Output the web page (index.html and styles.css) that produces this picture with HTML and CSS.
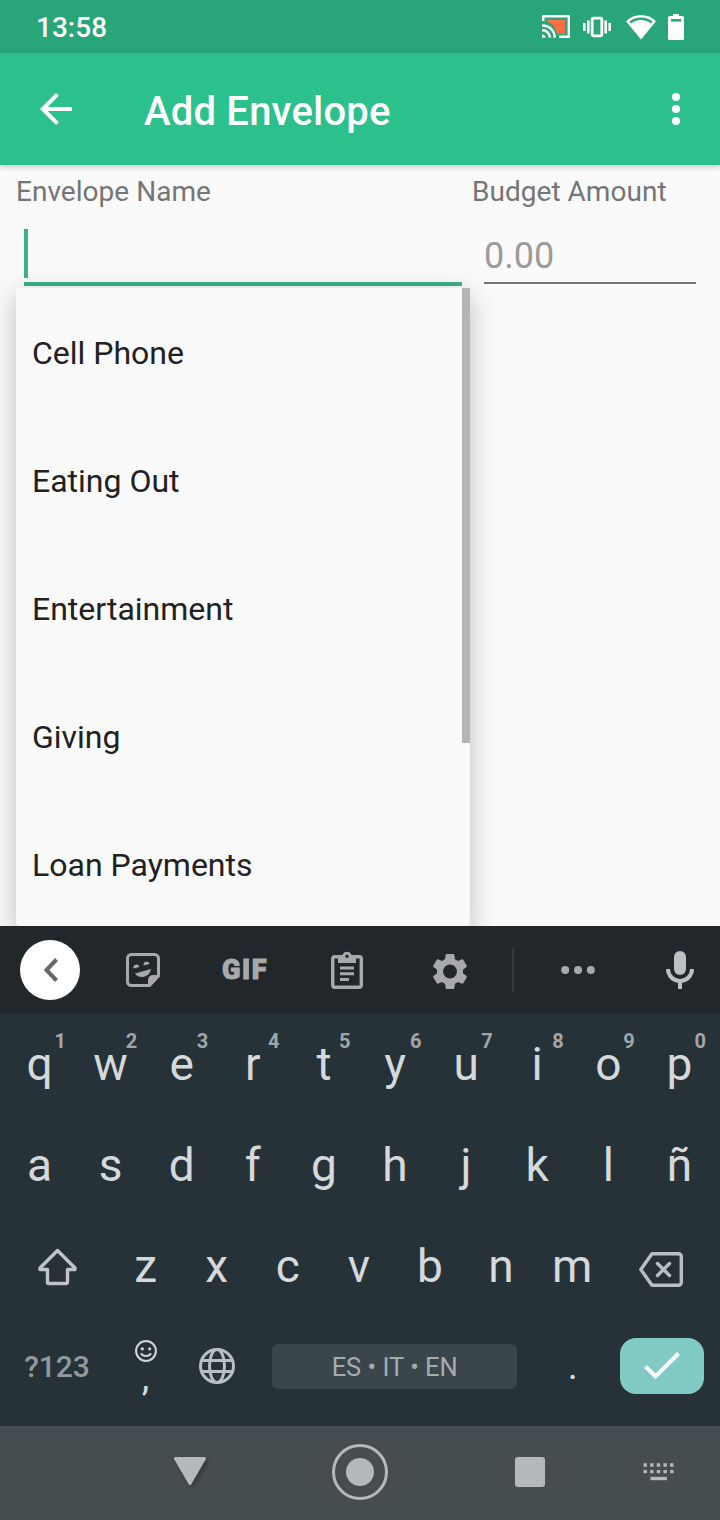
FILE: index.html
```html
<!DOCTYPE html>
<html lang="en">
<head>
    <meta charset="UTF-8">
    <meta name="viewport" content="width=device-width, initial-scale=1.0">
    <title>Add Envelope</title>
    <link rel="stylesheet" href="styles.css">
</head>
<body>
    <div class="status-bar">
        <span class="clock">13:58</span>
        <div class="status-icons">
            <!-- cast -->
            <svg width="28" height="24" viewBox="0 0 28 24">
                <path d="M5 5h18v14h-8C14 12 10 8 5 7z" fill="#ff6e40"/>
                <path d="M1.2 6V1.2h25.6v20.6H17" fill="none" stroke="#fff" stroke-width="2.4" stroke-linejoin="round"/>
                <path d="M0 10.5a12 12 0 0 1 12.7 12.3M0 15.2a7.6 7.6 0 0 1 8 7.6" fill="none" stroke="#fff" stroke-width="2.4"/>
                <path d="M0 19.5a3.5 3.5 0 0 1 3.6 3.3H0z" fill="#fff"/>
            </svg>
            <!-- vibrate -->
            <svg width="28" height="22" viewBox="0 0 28 22">
                <rect x="9.2" y="2.2" width="9.6" height="17.6" rx="1" fill="none" stroke="#fff" stroke-width="2.8"/>
                <path d="M1.3 7v8M5.3 4.5v13M22.7 4.5v13M26.7 7v8" stroke="#fff" stroke-width="2.6"/>
            </svg>
            <!-- wifi -->
            <svg class="wifi" width="30" height="26" viewBox="0 0 30 26">
                <path d="M0 7.2C8.5-1.2 21.5-1.2 30 7.2L15 25.5z" fill="#fff"/>
                <path d="M4.2 8.5C10.5 3.4 19.5 3.4 25.8 8.5" fill="none" stroke="#28a579" stroke-width="2.4"/>
            </svg>
            <!-- battery -->
            <svg width="16" height="26" viewBox="0 0 16 26">
                <path d="M5 0h6v2h3.500A1.500 1.500 0 0 1 16 3.500v21a1.500 1.500 0 0 1-1.500 1.500h-13A1.500 1.500 0 0 1 0 24.500v-21A1.500 1.500 0 0 1 1.500 2H5z" fill="#fff"/>
                <path d="M3 5h10v2.600H3z" fill="#28a579"/>
            </svg>
        </div>
    </div>

    <div class="app-bar">
        <svg width="32" height="32" viewBox="4 4 16 16">
            <path d="M20 11H7.830l5.590-5.590L12 4l-8 8 8 8 1.410-1.410L7.830 13H20v-2z" fill="#fff"/>
        </svg>
        <h1 class="title">Add Envelope</h1>
        <svg width="8" height="32" viewBox="0 0 8 32" fill="#fff">
            <circle cx="4" cy="4" r="4"/>
            <circle cx="4" cy="16" r="4"/>
            <circle cx="4" cy="28" r="4"/>
        </svg>
    </div>

    <div class="content">
        <div class="field name-field">
            <label>Envelope Name</label>
            <div class="input focused"><span class="caret"></span></div>
        </div>
        <div class="field amount-field">
            <label>Budget Amount</label>
            <div class="input">0.00</div>
        </div>

        <ul class="dropdown">
            <li>Cell Phone</li>
            <li>Eating Out</li>
            <li>Entertainment</li>
            <li>Giving</li>
            <li>Loan Payments</li>
        </ul>
        <div class="scrollbar"></div>
    </div>

    <div class="toolbar">
        <div class="collapse">
            <svg width="16" height="24" viewBox="0 0 16 24">
                <path d="M13.500 1.500L3.500 12l10 10.500" fill="none" stroke="#666" stroke-width="4"/>
            </svg>
        </div>
        <div class="tool">
            <!-- sticker -->
            <svg width="34" height="34" viewBox="0 0 34 34">
                <path d="M5.500 1.500h23a4 4 0 0 1 4 4v17.500l-9 9.500h-18a4 4 0 0 1-4-4v-23a4 4 0 0 1 4-4z" fill="none" stroke="#a7a9ab" stroke-width="3"/>
                <path d="M22 33v-6a5 5 0 0 1 5-5h6z" fill="#a7a9ab"/>
                <path d="M7.500 15.500a3 3 0 1 1 5.900-1.600zM17.700 12.600a3 3 0 1 1 5.900-1.600zM9 20.500l16-4.500c-.8 8-12 11-16 4.500z" fill="#a7a9ab"/>
            </svg>
        </div>
        <div class="tool gif">GIF</div>
        <div class="tool">
            <!-- clipboard -->
            <svg width="32" height="38" viewBox="0 0 32 38">
                <rect x="1.700" y="5.700" width="28.600" height="30.600" rx="2" fill="none" stroke="#a7a9ab" stroke-width="3.400"/>
                <path d="M7 4h4.500a4.700 4.700 0 0 1 9 0H25v8H7z" fill="#a7a9ab"/>
                <circle cx="16" cy="5.200" r="1.700" fill="#22272b"/>
                <path d="M9 17h14M9 22.700h14M9 28.400h9" stroke="#a7a9ab" stroke-width="3"/>
            </svg>
        </div>
        <div class="tool settings">
            <!-- settings -->
            <svg width="34" height="35" viewBox="2.200 2 19.600 20" preserveAspectRatio="none">
                <path d="M19.430 12.980c.04-.32.070-.64.070-.98s-.03-.66-.07-.98l2.110-1.650c.19-.15.240-.42.120-.64l-2-3.460c-.12-.22-.39-.3-.61-.22l-2.490 1c-.52-.4-1.080-.73-1.690-.98l-.38-2.650C14.460 2.180 14.250 2 14 2h-4c-.25 0-.46.180-.49.420l-.38 2.650c-.61.250-1.170.590-1.690.980l-2.490-1c-.23-.09-.49 0-.61.220l-2 3.460c-.13.220-.07.490.12.640l2.110 1.650c-.04.320-.07.650-.07.980s.03.660.07.980l-2.110 1.650c-.19.150-.24.420-.12.640l2 3.460c.12.220.39.300.61.220l2.490-1c.52.400 1.080.730 1.690.980l.38 2.650c.03.240.24.420.49.420h4c.25 0 .46-.18.490-.42l.38-2.650c.61-.25 1.170-.59 1.690-.98l2.490 1c.23.090.49 0 .61-.22l2-3.460c.12-.22.070-.49-.12-.64l-2.110-1.650zM12 16a4 4 0 1 1 0-8 4 4 0 0 1 0 8z" fill="#a7a9ab"/>
            </svg>
        </div>
        <div class="divider"></div>
        <div class="tool more">
            <svg width="34" height="8" viewBox="0 0 34 8" fill="#a7a9ab">
                <circle cx="4.200" cy="4" r="4"/>
                <circle cx="17" cy="4" r="4"/>
                <circle cx="29.800" cy="4" r="4"/>
            </svg>
        </div>
        <div class="tool mic">
            <svg width="28" height="38" viewBox="0 0 28 38">
                <rect x="8" y="0" width="12" height="24" rx="6" fill="#bdbfc1"/>
                <path d="M2 18a12 12 0 0 0 24 0M14 30v8" fill="none" stroke="#bdbfc1" stroke-width="4"/>
            </svg>
        </div>
    </div>

    <div class="keyboard">
        <div class="row">
            <div class="key">q<sup>1</sup></div>
            <div class="key">w<sup>2</sup></div>
            <div class="key">e<sup>3</sup></div>
            <div class="key">r<sup>4</sup></div>
            <div class="key">t<sup>5</sup></div>
            <div class="key">y<sup>6</sup></div>
            <div class="key">u<sup>7</sup></div>
            <div class="key">i<sup>8</sup></div>
            <div class="key">o<sup>9</sup></div>
            <div class="key">p<sup>0</sup></div>
        </div>
        <div class="row">
            <div class="key">a</div>
            <div class="key">s</div>
            <div class="key">d</div>
            <div class="key">f</div>
            <div class="key">g</div>
            <div class="key">h</div>
            <div class="key">j</div>
            <div class="key">k</div>
            <div class="key">l</div>
            <div class="key">ñ</div>
        </div>
        <div class="row">
            <div class="key wide shift">
                <svg width="40" height="38" viewBox="0 0 40 38">
                    <path d="M19.500 2.500L2 20v1.500h7.500V34a1.500 1.500 0 0 0 1.500 1.500h17a1.500 1.500 0 0 0 1.500-1.500V21.500H37V20z" fill="none" stroke="#c0c4c7" stroke-width="3.400" stroke-linejoin="round"/>
                </svg>
            </div>
            <div class="key">z</div>
            <div class="key">x</div>
            <div class="key">c</div>
            <div class="key">v</div>
            <div class="key">b</div>
            <div class="key">n</div>
            <div class="key">m</div>
            <div class="key wide backspace">
                <svg width="44" height="35" viewBox="0 0 44 35">
                    <path d="M13 1.700h26.500a2.800 2.800 0 0 1 2.800 2.800v26a2.800 2.800 0 0 1-2.800 2.800H13L1.800 17.500z" fill="none" stroke="#b9bec2" stroke-width="3.400" stroke-linejoin="round"/>
                    <path d="M18.500 11.500l12 12M30.500 11.500l-12 12" stroke="#b9bec2" stroke-width="3.400" stroke-linecap="round"/>
                </svg>
            </div>
        </div>
        <div class="row bottom-row">
            <div class="key wide symbols">?123</div>
            <div class="key comma">
                <svg width="22" height="22" viewBox="0 0 22 22">
                    <circle cx="11" cy="11" r="9.900" fill="none" stroke="#d3d6d8" stroke-width="2"/>
                    <circle cx="7.300" cy="8.800" r="1.600" fill="#d3d6d8"/>
                    <circle cx="14.700" cy="8.800" r="1.600" fill="#d3d6d8"/>
                    <path d="M6 13.300c2 3.600 8 3.600 10 0" fill="none" stroke="#d3d6d8" stroke-width="2"/>
                </svg>
                <span>,</span>
            </div>
            <div class="key">
                <!-- language switch -->
                <svg width="36" height="36" viewBox="0 0 36 36" fill="none" stroke="#b9bec2" stroke-width="3">
                    <circle cx="18" cy="18" r="16.500"/>
                    <ellipse cx="18" cy="18" rx="7.500" ry="16.500"/>
                    <path d="M3 12.500h30M3 23.500h30"/>
                </svg>
            </div>
            <div class="space-cell"><div class="space">ES • IT • EN</div></div>
            <div class="key period">.</div>
            <div class="enter">
                <svg width="36" height="28" viewBox="0 0 36 28">
                    <path d="M1.500 14.500l10 10L34.500 1.500" fill="none" stroke="#fff" stroke-width="4"/>
                </svg>
            </div>
        </div>
    </div>

    <div class="nav-bar">
        <div class="nav-item">
            <svg class="back" width="32" height="28" viewBox="0 0 32 28">
                <path d="M1.500 1.500h29L16 26.500z" fill="#b4b9ba" stroke="#b4b9ba" stroke-width="3" stroke-linejoin="round"/>
            </svg>
        </div>
        <div class="nav-item">
            <svg width="56" height="56" viewBox="0 0 56 56">
                <circle cx="28" cy="28" r="26.500" fill="none" stroke="#b4b9ba" stroke-width="3"/>
                <circle cx="28" cy="28" r="14" fill="#b4b9ba"/>
            </svg>
        </div>
        <div class="nav-item"><div class="recents"></div></div>
        <div class="nav-item keyboard-switch">
            <svg width="31" height="18" viewBox="0 0 31 18">
                <path d="M.5 2h30M.5 8.600h30" stroke="#b4b9ba" stroke-width="3.400" stroke-dasharray="3.400 3.250"/>
                <path d="M7.500 15.500H24" stroke="#b4b9ba" stroke-width="3.400"/>
            </svg>
        </div>
    </div>
</body>
</html>
```
FILE: styles.css
```css
* {
    box-sizing: border-box;
}

body {
    margin: 0;
    width: 720px;
    height: 1520px;
    display: flex;
    flex-direction: column;
    overflow: hidden;
    background-color: #fafafa;
    font-family: Roboto, sans-serif;
}

svg {
    display: block;
    flex: none;
}

.status-bar {
    height: 53px;
    flex: none;
    display: flex;
    justify-content: space-between;
    align-items: center;
    padding: 0 36px;
    background-color: #28a579;
    color: #fff;
}

.clock {
    font-size: 28px;
    font-weight: 500;
    line-height: 34px;
    padding-top: 2px;
}

.status-icons {
    display: flex;
    align-items: center;
    gap: 13px;
}

.wifi {
    margin: 0 -1px 0 2px;
}

.app-bar {
    height: 112px;
    flex: none;
    display: flex;
    align-items: center;
    padding: 0 40px;
    background-color: #2cc08c;
    color: #fff;
    box-shadow: 0 2px 6px rgba(0, 0, 0, 0.2);
    z-index: 1;
}

.title {
    margin: 0 0 0 72px;
    padding-top: 4px;
    flex: 1;
    font-size: 40px;
    font-weight: 500;
    letter-spacing: 0.2px;
}

.content {
    height: 761px;
    flex: none;
    position: relative;
    overflow: hidden;
    display: flex;
    padding: 8px 16px 0;
}

.name-field {
    width: 456px;
}

.amount-field {
    width: 232px;
}

.field label {
    display: block;
    font-size: 28px;
    line-height: 37px;
    letter-spacing: 0.03px;
    color: #757575;
}

.input {
    height: 66px;
    margin: 8px 8px 0 12px;
    padding-top: 17px;
    border-bottom: 2px solid #757575;
    font-size: 36px;
    line-height: 42px;
    color: #9b9b9b;
}

.input.focused {
    height: 68px;
    margin: 8px 10px 0 8px;
    padding-top: 11px;
    border-bottom: 4px solid #3db088;
}

.caret {
    display: block;
    width: 4px;
    height: 49px;
    background-color: #3db088;
}

/* suggestions shown over the form */
.dropdown {
    position: absolute;
    left: 16px;
    top: 123px;
    width: 454px;
    height: 638px;
    margin: 0;
    padding: 0;
    list-style: none;
    overflow: hidden;
    background-color: #fafafa;
    border-radius: 4px;
    box-shadow: 0 8px 28px rgba(0, 0, 0, 0.25);
}

.dropdown li {
    height: 128px;
    padding-left: 16px;
    font-size: 32px;
    line-height: 130px;
    color: #212121;
}

.scrollbar {
    position: absolute;
    left: 462px;
    top: 123px;
    width: 8px;
    height: 455px;
    background-color: #b5b5b5;
}

.toolbar {
    height: 88px;
    flex: none;
    display: flex;
    align-items: center;
    padding-left: 20px;
    background-color: #22272b;
}

.collapse {
    width: 60px;
    height: 60px;
    margin-right: 12px;
    padding-left: 2px;
    border-radius: 50%;
    background-color: #fff;
    display: flex;
    align-items: center;
    justify-content: center;
}

.tool {
    width: 102px;
    display: flex;
    justify-content: center;
}

.gif {
    font-size: 27px;
    font-weight: 900;
    letter-spacing: 1.5px;
    color: #a7a9ab;
    -webkit-text-stroke: 1px #a7a9ab;
}

.settings {
    padding: 2px 0 0 1px;
}

.divider {
    width: 2px;
    height: 44px;
    margin-left: 12px;
    background-color: #35393d;
}

.more {
    width: 128px;
}

.mic {
    width: 76px;
}

.keyboard {
    height: 412px;
    flex: none;
    padding: 0 4px;
    background-color: #273238;
    color: #d5d9dc;
}

.row {
    height: 101px;
    display: flex;
}

.key {
    position: relative;
    width: 71.1px;
    height: 100px;
    display: flex;
    align-items: center;
    justify-content: center;
    font-size: 46px;
}

.key sup {
    position: absolute;
    right: 9px;
    top: 15px;
    font-size: 20px;
    line-height: 24px;
    font-weight: 700;
    color: #a0a6aa;
}

.wide {
    width: 106px;
}

.shift {
    padding: 2px 0 0 1px;
}

.backspace {
    padding-top: 6px;
}

.bottom-row {
    margin-top: -1px;
}

.symbols {
    font-size: 30px;
    font-weight: 500;
    color: #92999e;
}

.comma {
    flex-direction: column;
    font-size: 38px;
    line-height: 30px;
}

.space-cell {
    width: 285px;
    display: flex;
    align-items: center;
    justify-content: center;
}

.space {
    width: 245px;
    height: 45px;
    border-radius: 6px;
    background-color: #3b464c;
    color: #a5acb0;
    font-size: 25.5px;
    line-height: 46px;
    text-align: center;
}

.period {
    font-size: 38px;
}

.enter {
    width: 84px;
    height: 56px;
    margin: 22px 0 0 12px;
    border-radius: 16px;
    background-color: #82cbc4;
    display: flex;
    align-items: center;
    justify-content: center;
}

.nav-bar {
    flex: 1;
    display: flex;
    align-items: center;
    padding: 0 0 2px 105px;
    background-color: #454d51;
}

.nav-item {
    width: 170px;
    display: flex;
    justify-content: center;
}

.back {
    margin-top: -3px;
    filter: drop-shadow(2px 2px 2px rgba(0, 0, 0, 0.3));
}

.recents {
    width: 30px;
    height: 30px;
    border-radius: 3px;
    background-color: #b4b9ba;
}

.keyboard-switch {
    width: 86px;
}
```
